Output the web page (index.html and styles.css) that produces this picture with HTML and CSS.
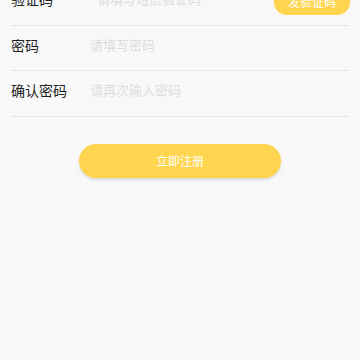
FILE: index.html
```html
<!DOCTYPE html>
<html>
<head>
<meta charset="utf-8">
<link rel="stylesheet" href="styles.css">
</head>
<body>
<div class="page">
  <div class="form">
    <div class="row">
      <span class="label">验证码</span>
      <span class="ph ph-code">请填写短信验证码</span>
      <span class="send">发验证码</span>
    </div>
    <div class="row">
      <span class="label">密码</span>
      <span class="ph">请填写密码</span>
    </div>
    <div class="row">
      <span class="label">确认密码</span>
      <span class="ph">请再次输入密码</span>
    </div>
  </div>
  <div class="actions">
    <button class="submit">立即注册</button>
  </div>
</div>
</body>
</html>
```
FILE: styles.css
```css
html, body {
  margin: 0;
  padding: 0;
  background: #f8f8f8;
  font-family: "Noto Sans CJK SC", "Noto Sans", sans-serif;
  height: 100%;
  overflow: hidden;
}
.page {
  margin-top: -20px;
}
.form {
  padding: 0 11px;
}
.row {
  display: flex;
  align-items: center;
  height: 44.5px;
  border-bottom: 1px solid #e6e6e6;
}
.label {
  width: 79px;
  flex: none;
  font-size: 14px;
  color: #1e1e1e;
  line-height: 20px;
  margin-top: -6px;
}
.ph {
  flex: 1;
  font-size: 13px;
  color: #dddddd;
  line-height: 20px;
  margin-top: -6px;
}
.ph-code {
  padding-left: 7px;
}
.send {
  flex: none;
  width: 76px;
  height: 26px;
  line-height: 26px;
  border-radius: 13px;
  background: #ffd54f;
  color: #fff;
  font-size: 12px;
  text-align: center;
  margin-right: -1px;
}
.actions {
  display: flex;
  justify-content: center;
  padding-top: 27px;
}
.submit {
  width: 202px;
  height: 34px;
  border: none;
  border-radius: 17px;
  background: #ffd54f;
  color: #fff;
  font-family: "Noto Sans CJK SC", "Noto Sans", sans-serif;
  font-size: 12px;
  box-shadow: 0 2px 3px rgba(0,0,0,0.12);
  padding: 0;
}
```
